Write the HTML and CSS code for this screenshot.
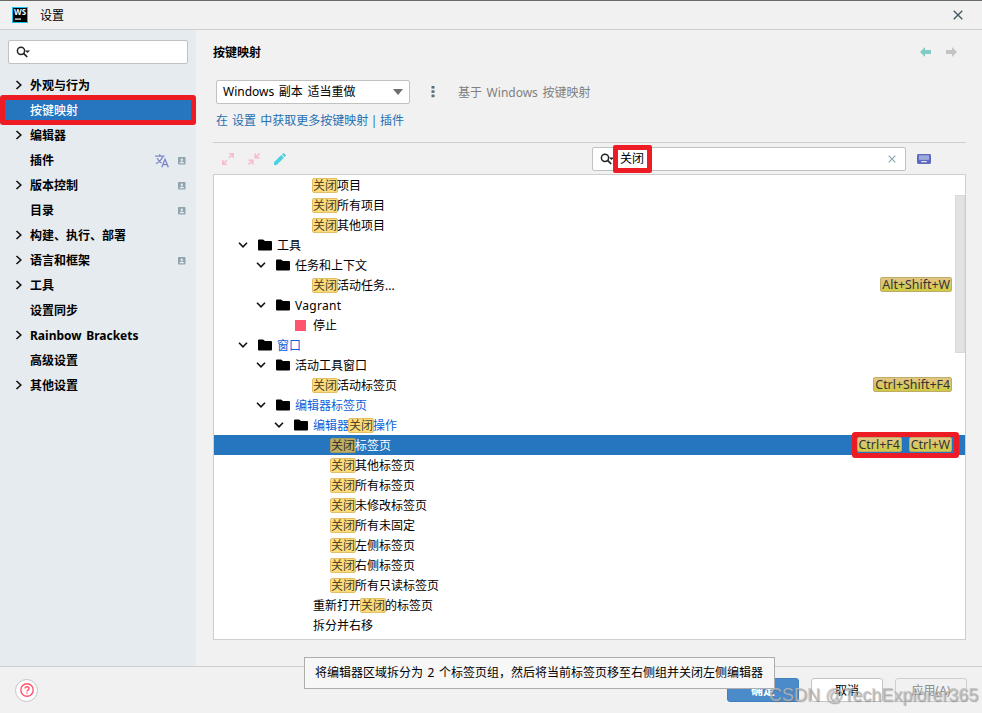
FILE: index.html
```html
<!DOCTYPE html>
<html lang="zh-CN">

<head>
    <meta charset="UTF-8" />
    <meta name="viewport" content="width=device-width, initial-scale=1.0" />
    <title>设置</title>
    <link rel="stylesheet" href="styles.css">
</head>

<body>

<svg class="sprite" width="0" height="0">
    <symbol id="right" viewBox="0 0 8 10"><path d="M1.5 1 5.8 5 1.5 9" fill="none" stroke="#111" stroke-width="1.6"/></symbol>
    <symbol id="down" viewBox="0 0 10 8"><path d="M1 1.8 5 5.8 9 1.8" fill="none" stroke="#111" stroke-width="1.6"/></symbol>
    <symbol id="folder" viewBox="0 0 14 12"><path d="M0 1.5Q0 .5 1 .5H5L7 2H13Q14 2 14 3V10.5Q14 11.5 13 11.5H1Q0 11.5 0 10.5Z"/></symbol>
    <symbol id="project" viewBox="0 0 8 8"><rect width="7.5" height="7.5" rx=".8" fill="#90a4ae"/><circle cx="3.8" cy="2.8" r="1.2" fill="#e6ebef"/><path d="M1.4 6.2Q1.5 4.5 3.8 4.5T6.2 6.2Z" fill="#e6ebef"/></symbol>
    <symbol id="search" viewBox="0 0 14 12"><circle cx="5" cy="4.8" r="3.6" fill="none" stroke="#222" stroke-width="1.5"/><path d="M7.6 7.4 11.2 11" stroke="#222" stroke-width="1.7"/><path d="M9 4.4H14L11.5 7Z" fill="#222"/></symbol>
</svg>

<div class="window">
    <header class="titlebar">
        <svg class="titlebar__logo" width="16" height="16" viewBox="0 0 16 16">
            <rect width="16" height="16" fill="#15c2ee"/>
            <rect x="1" y="1" width="14" height="14"/>
            <text x="8" y="8.3" text-anchor="middle" textLength="12" lengthAdjust="spacingAndGlyphs">WS</text>
            <rect x="3" y="11.5" width="6" height="1.2" fill="#fff"/>
        </svg>
        <span>设置</span>
        <svg class="titlebar__close" width="10" height="10" viewBox="0 0 10 10"><path d="M.7.7 9.3 9.3M9.3.7.7 9.3" stroke="#455a64" stroke-width="1.4"/></svg>
    </header>

    <div class="content">
        <aside class="sidebar">
            <div class="field sidebar__search"><svg width="14" height="12"><use href="#search"/></svg></div>
            <nav class="menu">
                <div class="menu__item"><svg class="menu__arrow"><use href="#right"/></svg>外观与行为</div>
                <div class="menu__item menu__item--active">按键映射</div>
                <div class="menu__item"><svg class="menu__arrow"><use href="#right"/></svg>编辑器</div>
                <div class="menu__item">插件
                    <svg class="menu__lang" width="14" height="14" viewBox="0 0 14 14" fill="none" stroke="#7986cb" stroke-width="1.3"><path d="M0 2.2H9.5M4.7.2V2.2M7.8 2.4Q6.3 6.8 1 9.8M2.2 4.2Q3.8 7.5 6.6 9M6.8 13.2 10 5.3 13.3 13.2M8 10.7H12.2"/></svg>
                    <svg class="menu__badge"><use href="#project"/></svg>
                </div>
                <div class="menu__item"><svg class="menu__arrow"><use href="#right"/></svg>版本控制<svg class="menu__badge"><use href="#project"/></svg></div>
                <div class="menu__item">目录<svg class="menu__badge"><use href="#project"/></svg></div>
                <div class="menu__item"><svg class="menu__arrow"><use href="#right"/></svg>构建、执行、部署</div>
                <div class="menu__item"><svg class="menu__arrow"><use href="#right"/></svg>语言和框架<svg class="menu__badge"><use href="#project"/></svg></div>
                <div class="menu__item"><svg class="menu__arrow"><use href="#right"/></svg>工具</div>
                <div class="menu__item">设置同步</div>
                <div class="menu__item"><svg class="menu__arrow"><use href="#right"/></svg>Rainbow Brackets</div>
                <div class="menu__item">高级设置</div>
                <div class="menu__item"><svg class="menu__arrow"><use href="#right"/></svg>其他设置</div>
            </nav>
        </aside>

        <main class="keymap">
            <div class="keymap__head">
                <h1>按键映射</h1>
                <svg width="11" height="10" viewBox="0 0 11 10"><path d="M0 5 5 0V3H11V7H5V10Z" fill="#80cbc4"/></svg>
                <svg width="11" height="10" viewBox="0 0 11 10"><path d="M11 5 6 0V3H0V7H6V10Z" fill="#c4c4c4"/></svg>
            </div>
            <div class="keymap__scheme">
                <div class="field select">Windows 副本 适当重做<svg width="10" height="6" viewBox="0 0 10 6"><path d="M0 0H10L5 6Z" fill="#6e6e6e"/></svg></div>
                <svg width="4" height="12" viewBox="0 0 4 12" fill="#546e7a"><rect x=".5" y="0" width="3" height="2.6"/><rect x=".5" y="4.3" width="3" height="2.6"/><rect x=".5" y="8.6" width="3" height="2.6"/></svg>
                <span class="keymap__base">基于 Windows 按键映射</span>
            </div>
            <div class="keymap__links"><a>在 设置 中获取更多按键映射</a> | <a>插件</a></div>

            <div class="toolbar">
                <svg width="12" height="12" viewBox="0 0 12 12" fill="none" stroke="#f8bbd0" stroke-width="1.6"><path d="M7 .8H11.2V5M11 1 7 5M.8 7V11.2H5M1 11 5 7"/></svg>
                <svg width="12" height="12" viewBox="0 0 12 12" fill="none" stroke="#f8bbd0" stroke-width="1.6"><path d="M7.2.5V4.8H11.5M7.2 4.8 11.5.5M.5 7.2H4.8V11.5M4.8 7.2.5 11.5"/></svg>
                <svg width="12" height="12" viewBox="0 0 12 12" fill="#4dd0e1"><path d="M0 12V9.3L7.2 2.1 9.9 4.8 2.7 12ZM8 1.4 9.1.3Q9.6-.2 10.2.4L11.6 1.8Q12.2 2.4 11.7 2.9L10.6 4Z"/></svg>
                <div class="field toolbar__search">
                    <svg width="14" height="12"><use href="#search"/></svg>
                    <span>关闭</span>
                    <svg class="toolbar__clear" width="8" height="8" viewBox="0 0 8 8"><path d="M.7.7 7.3 7.3M7.3.7.7 7.3" stroke="#90a4ae" stroke-width="1.2"/></svg>
                </div>
                <svg width="14" height="10" viewBox="0 0 14 10"><rect width="14" height="10" rx="1.4" fill="#5c6bc0"/><rect x="2" y="1.3" width="10" height="4.6" fill="#9fa8da"/><rect x="4.2" y="7.2" width="5.6" height="1" fill="#fff"/></svg>
            </div>

            <div class="tree">
                <div class="row lvl-3"><mark>关闭</mark>项目</div>
                <div class="row lvl-3"><mark>关闭</mark>所有项目</div>
                <div class="row lvl-3"><mark>关闭</mark>其他项目</div>
                <div class="row row--group lvl-1"><svg class="row__arrow"><use href="#down"/></svg><svg class="row__folder"><use href="#folder"/></svg>工具</div>
                <div class="row row--group lvl-2"><svg class="row__arrow"><use href="#down"/></svg><svg class="row__folder"><use href="#folder"/></svg>任务和上下文</div>
                <div class="row lvl-3"><mark>关闭</mark>活动任务...<span class="keys"><kbd>Alt+Shift+W</kbd></span></div>
                <div class="row row--group row--latin lvl-2"><svg class="row__arrow"><use href="#down"/></svg><svg class="row__folder"><use href="#folder"/></svg>Vagrant</div>
                <div class="row lvl-3"><i class="row__stop"></i>停止</div>
                <div class="row row--group row--changed lvl-1"><svg class="row__arrow"><use href="#down"/></svg><svg class="row__folder"><use href="#folder"/></svg>窗口</div>
                <div class="row row--group lvl-2"><svg class="row__arrow"><use href="#down"/></svg><svg class="row__folder"><use href="#folder"/></svg>活动工具窗口</div>
                <div class="row lvl-3"><mark>关闭</mark>活动标签页<span class="keys"><kbd>Ctrl+Shift+F4</kbd></span></div>
                <div class="row row--group row--changed lvl-2"><svg class="row__arrow"><use href="#down"/></svg><svg class="row__folder"><use href="#folder"/></svg>编辑器标签页</div>
                <div class="row row--group row--changed lvl-3"><svg class="row__arrow"><use href="#down"/></svg><svg class="row__folder"><use href="#folder"/></svg>编辑器<mark>关闭</mark>操作</div>
                <div class="row row--selected lvl-4"><mark>关闭</mark>标签页<span class="keys"><kbd>Ctrl+F4</kbd><kbd>Ctrl+W</kbd></span></div>
                <div class="row lvl-4"><mark>关闭</mark>其他标签页</div>
                <div class="row lvl-4"><mark>关闭</mark>所有标签页</div>
                <div class="row lvl-4"><mark>关闭</mark>未修改标签页</div>
                <div class="row lvl-4"><mark>关闭</mark>所有未固定</div>
                <div class="row lvl-4"><mark>关闭</mark>左侧标签页</div>
                <div class="row lvl-4"><mark>关闭</mark>右侧标签页</div>
                <div class="row lvl-4"><mark>关闭</mark>所有只读标签页</div>
                <div class="row lvl-3">重新打开<mark>关闭</mark>的标签页</div>
                <div class="row lvl-3">拆分并右移</div>
                <div class="tree__scroll"></div>
            </div>
        </main>
    </div>

    <footer class="footer">
        <div class="help"><svg width="14" height="14" viewBox="0 0 14 14" fill="none" stroke="#ff5370" stroke-width="1.4"><circle cx="7" cy="7" r="6.2"/><path d="M5 5.6Q5 3.7 7 3.7T9 5.5C9 6.8 7 6.9 7 8.4M7 9.4V10.8"/></svg></div>
        <div class="btn btn--primary">确定</div>
        <div class="btn">取消</div>
        <div class="btn btn--disabled">应用(A)</div>
        <div class="tooltip">将编辑器区域拆分为 2 个标签页组，然后将当前标签页移至右侧组并关闭左侧编辑器</div>
        <div class="watermark">CSDN @TechExplorer365</div>
    </footer>
</div>

</body>
</html>
```
FILE: styles.css
```css
*,
*::before,
*::after {
    box-sizing: border-box;
}

html,
body,
h1 {
    margin: 0;
    padding: 0;
}

body {
    font: 12px/20px "Noto Sans", "Noto Sans CJK SC", sans-serif;
    word-spacing: 1.5px;
    color: #000;
    background: #f1f1f1;
    overflow: hidden;
}
svg {
    flex: none;
    display: block;
}
.sprite {
    position: absolute;
}
.window {
    height: 713px;
    display: flex;
    flex-direction: column;
}

/* title bar */
.titlebar {
    height: 30px;
    flex: none;
    display: flex;
    align-items: center;
    padding: 0 19px 0 12px;
    border-top: 1px solid #6b6b6b;
    border-bottom: 1px solid #cecece;
}
.titlebar__logo {
    margin-right: 12px;
}
.titlebar__logo text {
    font: bold 8px "Noto Sans", sans-serif;
    fill: #fff;
}
.titlebar span {
    padding-top: 2px;
}
.titlebar__close {
    margin-left: auto;
}

.content {
    flex: 1;
    min-height: 0;
    display: flex;
}
.field {
    height: 24px;
    display: flex;
    align-items: center;
    background: #fff;
    border: 1px solid #c1c1c1;
    border-radius: 2px;
}

/* sidebar */
.sidebar {
    width: 196px;
    flex: none;
    padding-top: 10px;
    background: #e6ebef;
}
.sidebar__search {
    margin: 0 8px 9px;
    padding-left: 7px;
}
.menu__item {
    position: relative;
    height: 25px;
    display: flex;
    align-items: center;
    padding: 0 10px 0 30px;
    font-weight: bold;
}
.menu__item--active {
    color: #fff;
    background: #2675bf;
    font-weight: 500;
}
.menu__item--active::after {
    content: "";
    position: absolute;
    inset: -3px 0 -2px;
    border: 5px solid #ed1c24;
    border-radius: 3px;
}
.menu__arrow {
    position: absolute;
    left: 15px;
    top: 7px;
    width: 8px;
    height: 10px;
}
.menu__badge {
    width: 8px;
    height: 8px;
    margin-left: auto;
}
.menu__lang {
    margin-left: auto;
}
.menu__lang + .menu__badge {
    margin-left: 9px;
}

/* keymap panel */
.keymap {
    flex: 1;
    padding: 12px 16px 0 17px;
}
.keymap__head {
    height: 20px;
    display: flex;
    align-items: center;
    gap: 15px;
    padding-right: 9px;
}
.keymap__head h1 {
    margin-right: auto;
    padding-top: 2px;
    font-size: 12px;
    font-weight: bold;
}
.keymap__scheme {
    display: flex;
    align-items: center;
    margin: 18px 0 6px 3px;
}
.select {
    width: 194px;
    margin-right: 21px;
    padding: 0 6px;
    line-height: 22px;
    justify-content: space-between;
}
.keymap__base {
    margin-left: 23px;
    padding-top: 2px;
    color: #808080;
}
.keymap__links {
    height: 20px;
    margin: 0 0 12px 3px;
    line-height: 22px;
    word-spacing: -0.5px;
    color: #2470b3;
}
.keymap__links a {
    word-spacing: 1px;
}

.toolbar {
    height: 32px;
    display: flex;
    align-items: center;
    gap: 14px;
    padding: 0 35px 0 9px;
    border-top: 1px solid #cecece;
}
.toolbar__search {
    position: relative;
    width: 314px;
    margin-left: auto;
    margin-right: -3px;
    padding: 0 9px 0 7px;
}
.toolbar__search span {
    position: relative;
    margin-left: 6px;
}
.toolbar__search span::after {
    content: "";
    position: absolute;
    inset: -4px -8px -4px -7px;
    border: 5px solid #ed1c24;
    border-radius: 2px;
}
.toolbar__clear {
    margin-left: auto;
}

/* actions tree */
.tree {
    position: relative;
    height: 466px;
    background: #fff;
    border: 1px solid #cecece;
}
.tree__scroll {
    position: absolute;
    top: 20px;
    right: 0;
    width: 10px;
    height: 158px;
    background: #e2e2e2;
    border: 1px solid #dadada;
}
.row {
    height: 20px;
    display: flex;
    align-items: center;
    padding-top: 2px;
    padding-left: var(--indent);
    white-space: nowrap;
}
.row--group {
    padding-left: calc(var(--indent) - 39px);
}
.row--latin {
    letter-spacing: 0.3px;
}
.lvl-1 { --indent: 63px; }
.lvl-2 { --indent: 81px; }
.lvl-3 { --indent: 99px; }
.lvl-4 { --indent: 117px; }
.row--changed {
    color: #0b5fd9;
}
.row--selected {
    color: #fff;
    background: #2675bf;
}
.row__arrow {
    width: 10px;
    height: 8px;
    margin: -2px 10px 0 0;
}
.row__folder {
    width: 14px;
    height: 12px;
    margin: -2px 5px 0 0;
}
.row__stop {
    width: 11px;
    height: 11px;
    margin: -2px 7px 0 -18px;
    background: #ff5370;
}
mark {
    height: 15px;
    margin: -1px -1px 0;
    line-height: 14px;
    color: #4a4430;
    background: #ffdc78;
    border: 1px solid #e0bf66;
    border-radius: 2px;
}
.row--selected mark {
    color: #333;
    background: #bfae60;
    border-color: #a79a63;
}
.keys {
    position: relative;
    display: flex;
    gap: 7px;
    margin: -3px 13px 0 auto;
}
kbd {
    height: 15px;
    padding: 0 1px;
    font-family: "Noto Sans", sans-serif;
    font-size: 12.4px;
    line-height: 13px;
    color: #333;
    background: linear-gradient(#e3c486, #d0cb45);
    border: 1px solid #bdad68;
    border-radius: 2px;
}
.row--selected .keys::after {
    content: "";
    position: absolute;
    inset: -5px -7px -6px -5px;
    border: 5px solid #ed1c24;
    border-radius: 3px;
}

/* footer */
.footer {
    position: relative;
    height: 47px;
    flex: none;
    display: flex;
    align-items: center;
    gap: 12px;
    padding: 0 15px;
    border-top: 1px solid #cecece;
}
.help {
    width: 23px;
    height: 23px;
    display: flex;
    align-items: center;
    justify-content: center;
    margin-right: auto;
    background: #fff;
    border: 1px solid #c4c4c4;
    border-radius: 50%;
}
.btn {
    width: 72px;
    height: 24px;
    line-height: 24px;
    text-align: center;
    background: #fff;
    border: 1px solid #c4c4c4;
    border-radius: 3px;
}
.btn--primary {
    color: #fff;
    font-weight: bold;
    background: #4c8bca;
    border-color: #4080bf;
}
.btn--disabled {
    color: #8c8c8c;
    background: #f1f1f1;
    border-color: #cfcfcf;
}
.tooltip {
    position: absolute;
    left: 304px;
    top: -10px;
    width: 471px;
    height: 32px;
    padding-left: 10px;
    line-height: 30px;
    white-space: nowrap;
    background: #f7f7f7;
    border: 1px solid #adadad;
}
.watermark {
    position: absolute;
    left: 769px;
    top: 18px;
    font-family: "Liberation Sans", sans-serif;
    font-size: 18px;
    word-spacing: 0;
    white-space: nowrap;
    color: rgba(190, 190, 190, 0.75);
    text-shadow: 1px 1px 1px rgba(110, 110, 110, 0.6);
}
```
